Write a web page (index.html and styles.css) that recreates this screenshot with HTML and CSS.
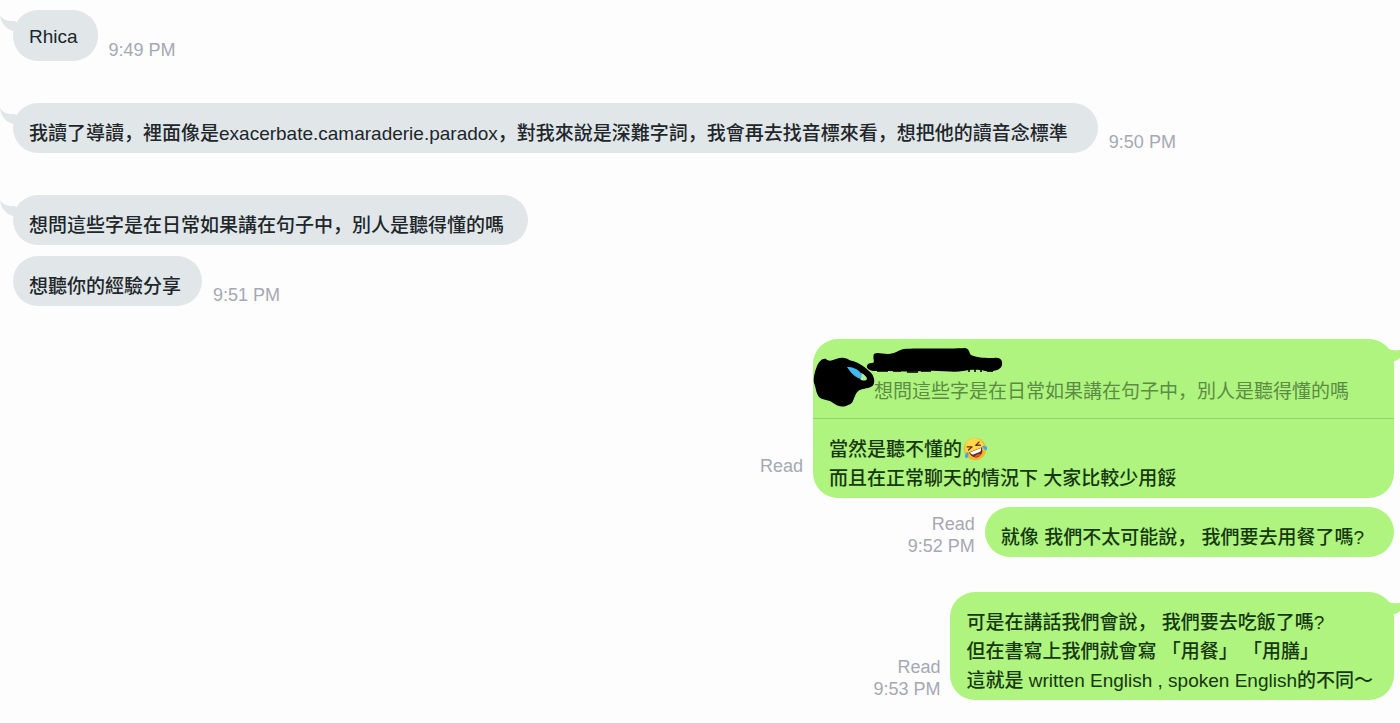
FILE: index.html
```html
<!DOCTYPE html>
<html lang="zh-Hans">
<head>
<meta charset="utf-8">
<meta name="viewport" content="width=device-width, initial-scale=1">
<title>Chat</title>
<link rel="stylesheet" href="styles.css">
</head>
<body>
<main class="chat">
  <section class="group">
    <article class="row">
      <div class="bubble latin">
        <svg class="tail" viewBox="0 0 20 20" aria-hidden="true"><path d="M0 1C3 6 8 7.500 15 7L20 14L14 17C7 16 1 10 0 1Z"/></svg>
        <p>Rhica</p>
      </div>
      <div class="meta"><time>9:49 PM</time></div>
    </article>
  </section>

  <section class="group">
    <article class="row">
      <div class="bubble long">
        <svg class="tail" viewBox="0 0 20 20" aria-hidden="true"><path d="M0 1C3 6 8 7.500 15 7L20 14L14 17C7 16 1 10 0 1Z"/></svg>
        <p>我讀了導讀，裡面像是exacerbate.camaraderie.paradox，對我來說是深難字詞，我會再去找音標來看，想把他的讀音念標準</p>
      </div>
      <div class="meta"><time>9:50 PM</time></div>
    </article>
  </section>

  <section class="group">
    <article class="row">
      <div class="bubble medium">
        <svg class="tail" viewBox="0 0 20 20" aria-hidden="true"><path d="M0 1C3 6 8 7.500 15 7L20 14L14 17C7 16 1 10 0 1Z"/></svg>
        <p>想問這些字是在日常如果講在句子中，別人是聽得懂的嗎</p>
      </div>
    </article>
    <article class="row">
      <div class="bubble"><p>想聽你的經驗分享</p></div>
      <div class="meta"><time>9:51 PM</time></div>
    </article>
  </section>

  <section class="group sent">
    <article class="row">
      <div class="meta raised"><span>Read</span></div>
      <div class="bubble reply">
        <svg class="tail" viewBox="0 0 20 20" aria-hidden="true"><path d="M0 8H9C11 9 12 9 13 9C15 10 18 9 20 9V17C18 19 16 20 14 20H0Z"/></svg>
        <blockquote class="quote">
          <svg class="scribble" viewBox="0 0 190 62" aria-hidden="true">
            <path class="trace" d="M64 29H75V33H64ZM80 29H88V33H80ZM94 29H105V34H94ZM108 29H118V33H108ZM155 28H157V33H155ZM161 28H163V33H161ZM167 28H169V33H167ZM174 28H180V33H174Z"/>
            <path d="M4 27C6 23 9 19 13 20C15 22 17 22 20 21C24 20 27 18 31 19C35 19 36 22 40 22C46 24 52 28 56 32C60 35 62 40 61 44C60 49 54 49 50 50C45 51 44 53 42 57C40 61 40 65 35 66C30 69 24 67 20 64C16 60 10 62 6 58C3 54 3 49 1 44C0 39 2 32 4 27Z"/>
            <path class="drop" d="M34 28C40 28 44 30 47 33C49 35 50 38 50 40C43 40 38 34 34 28Z"/>
            <path class="gap" d="M48 34C51 35 54 38 54 40C53 42 49 42 47 40C49 39 49 37 48 34Z"/>
            <path d="M61 15C64 13 69 15 75 15C82 15 85 11 91 10C105 9 135 10 152 9C157 10 156 14 158 16C165 19 173 19 181 19C187 18 190 21 189 26C188 31 181 33 172 32C164 30 157 31 150 32C140 34 127 31 113 32C91 33 75 32 60 32C52 31 52 24 59 24C63 24 59 19 61 15Z"/>
          </svg>
          <p>想問這些字是在日常如果講在句子中，別人是聽得懂的嗎</p>
        </blockquote>
        <div class="answer">
          <p>當然是聽不懂的<svg class="emoji" viewBox="0 0 48 48" role="img" aria-label="rolling on the floor laughing">
            <g transform="rotate(-22 24 24)">
              <circle cx="24" cy="24" r="22.500" fill="#fbb52c"/>
              <circle cx="24" cy="21" r="19" fill="#fed94c"/>
              <path d="M10 26H38C38 35 32 41 24 41S10 35 10 26Z" fill="#6b2b0d"/>
              <path d="M12 26.500H36C35 31 33 33 30 33H18C15 33 13 31 12 26.500Z" fill="#fff"/>
              <path d="M17 38C21 35 27 35 31 38C27 41 21 41 17 38Z" fill="#e0564a"/>
              <path d="M11 14L20 18L11 21M37 14L28 18L37 21" fill="none" stroke="#6b2b0d" stroke-width="2.500" stroke-linecap="round" stroke-linejoin="round"/>
              <path d="M9 24C3 25-2 29 0 33C3 37 9 32 9 24ZM39 24C45 25 50 29 48 33C45 37 39 32 39 24Z" fill="#3ba9ee"/>
            </g>
          </svg></p>
          <p>而且在正常聊天的情況下 大家比較少用餒</p>
        </div>
      </div>
    </article>
    <article class="row">
      <div class="meta"><span>Read</span><time>9:52 PM</time></div>
      <div class="bubble long"><p>就像 我們不太可能說， 我們要去用餐了嗎?</p></div>
    </article>
  </section>

  <section class="group sent">
    <article class="row">
      <div class="meta"><span>Read</span><time>9:53 PM</time></div>
      <div class="bubble">
        <svg class="tail" viewBox="0 0 20 20" aria-hidden="true"><path d="M0 8H9C11 9 12 9 13 9C15 10 18 9 20 9V17C18 19 16 20 14 20H0Z"/></svg>
        <p>可是在講話我們會說， 我們要去吃飯了嗎?</p>
        <p>但在書寫上我們就會寫 「用餐」 「用膳」</p>
        <p>這就是 written English , spoken English的不同～</p>
      </div>
    </article>
  </section>
</main>
</body>
</html>
```
FILE: styles.css
```css
* {
  box-sizing: border-box;
}

body {
  margin: 0;
  background: #fdfdfd;
  color: #20262a;
  font-family: "Liberation Sans", "Noto Sans CJK SC", sans-serif;
  font-size: 19px;
  font-weight: 500;
  line-height: 29px;
  overflow-x: hidden;
}

p,
blockquote {
  margin: 0;
}

.chat {
  display: flex;
  flex-direction: column;
  gap: 42px;
  padding: 10px 6px 22px 13px;
}

.group {
  display: flex;
  flex-direction: column;
  gap: 11px;
}

.row {
  display: flex;
  align-items: flex-end;
  gap: 11px;
}

.bubble {
  position: relative;
  padding: 16px 21px 5px 16px;
  border-radius: 25px;
  background: #e1e6e9;
}

.latin {
  padding: 12px 20px 10px 16px;
}

.medium {
  padding-right: 24px;
}

.long {
  padding-right: 30px;
}

.meta {
  display: flex;
  flex-direction: column;
  flex-shrink: 0;
  color: #a6a8b4;
  font-size: 18px;
  font-weight: 400;
  line-height: 22px;
}

.tail {
  position: absolute;
  top: 4px;
  left: -13px;
  width: 20px;
  height: 20px;
  fill: #e1e6e9;
  overflow: visible;
}

.sent {
  gap: 9px;
}

.sent + .sent {
  margin-top: -7px;
}

.sent .row {
  justify-content: flex-end;
  gap: 10px;
}

.sent .bubble {
  background: #aef47e;
  color: #17380f;
}

.sent .meta {
  text-align: right;
}

.sent .raised {
  padding-bottom: 21px;
}

.sent .tail {
  right: -6px;
  left: auto;
  top: 2px;
  fill: #aef47e;
}

.sent .reply {
  padding: 0;
  margin-top: -9px;
}

.quote {
  position: relative;
  padding: 38px 45px 12px 61px;
  border-bottom: 1px solid #96d36d;
  color: #5c8b45;
  font-weight: 400;
}

.scribble {
  position: absolute;
  top: 0;
  left: 0;
  width: 190px;
  height: 62px;
  overflow: visible;
}

.trace {
  fill: #26331e;
}

.drop {
  fill: #42b9ee;
}

.gap {
  fill: #b6ef91;
}

.answer {
  padding: 16px 24px 5px 16px;
}

.emoji {
  width: 24px;
  height: 24px;
  margin-left: 1px;
  vertical-align: -5px;
}
```
